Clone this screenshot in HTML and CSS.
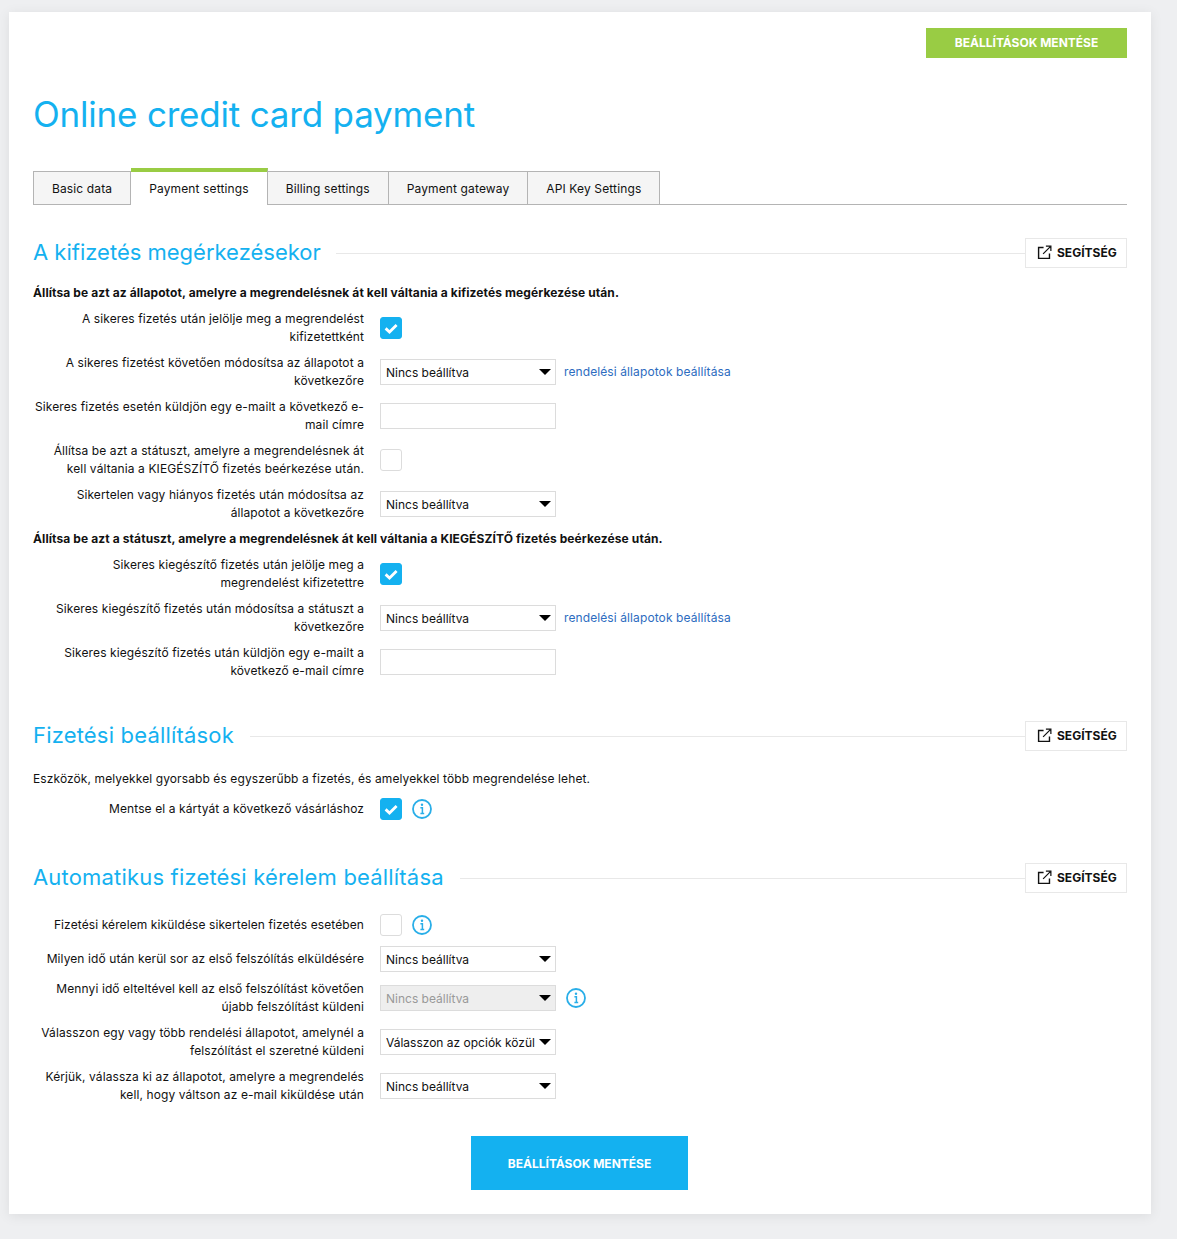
FILE: index.html
```html
<!DOCTYPE html>
<html lang="en">
<head>
    <meta charset="UTF-8">
    <meta name="viewport" content="width=device-width, initial-scale=1.0">
    <title>Online credit card payment</title>
    <link rel="stylesheet" href="styles.css">
</head>
<body>
    <svg class="icon-defs" width="0" height="0" aria-hidden="true">
        <symbol id="icon-check" viewBox="0 0 22 22">
            <path d="M5.6 11.4l3.9 3.6L16.6 8" fill="none" stroke="#fff" stroke-width="2.8"/>
        </symbol>
        <symbol id="icon-info" viewBox="0 0 20 20">
            <circle cx="10" cy="10" r="9" fill="none" stroke="currentColor" stroke-width="1.8"/>
            <circle cx="10" cy="5.8" r="1.2" fill="currentColor"/>
            <path d="M8.4 8.8H10.4V14.8M8.4 14.6H12.2" fill="none" stroke="currentColor" stroke-width="1.5"/>
        </symbol>
        <symbol id="icon-external" viewBox="0 0 16 16">
            <path d="M7 2.7H1.7V14.3H13.3V9" fill="none" stroke="currentColor" stroke-width="1.5"/>
            <path d="M6.5 9.5L14 2M9.5 1.2H14.8V6.5" fill="none" stroke="currentColor" stroke-width="1.3"/>
        </symbol>
    </svg>

    <div class="page-card">
        <div class="top-actions">
            <button class="btn btn-green">BEÁLLÍTÁSOK MENTÉSE</button>
        </div>

        <h1 class="page-title">Online credit card payment</h1>

        <ul class="tabs">
            <li class="tab">Basic data</li>
            <li class="tab active">Payment settings</li>
            <li class="tab">Billing settings</li>
            <li class="tab">Payment gateway</li>
            <li class="tab">API Key Settings</li>
        </ul>

        <section class="section section-first">
            <div class="section-head">
                <h2>A kifizetés megérkezésekor</h2>
                <span class="section-line"></span>
                <a href="#" class="help-btn"><svg class="help-icon"><use href="#icon-external"/></svg>SEGÍTSÉG</a>
            </div>
            <p class="section-note bold">Állítsa be azt az állapotot, amelyre a megrendelésnek át kell váltania a kifizetés megérkezése után.</p>
            <div class="form-rows">
                <div class="form-row">
                    <label>A sikeres fizetés után jelölje meg a megrendelést kifizetettként</label>
                    <div class="control"><span class="check checked"><svg><use href="#icon-check"/></svg></span></div>
                </div>
                <div class="form-row">
                    <label>A sikeres fizetést követően módosítsa az állapotot a következőre</label>
                    <div class="control">
                        <div class="select"><select><option>Nincs beállítva</option></select></div>
                        <a href="#" class="side-link">rendelési állapotok beállítása</a>
                    </div>
                </div>
                <div class="form-row">
                    <label>Sikeres fizetés esetén küldjön egy e-mailt a következő e-mail címre</label>
                    <div class="control"><input type="text" class="text-input"></div>
                </div>
                <div class="form-row">
                    <label>Állítsa be azt a státuszt, amelyre a megrendelésnek át kell váltania a KIEGÉSZÍTŐ fizetés beérkezése után.</label>
                    <div class="control"><span class="check"></span></div>
                </div>
                <div class="form-row">
                    <label>Sikertelen vagy hiányos fizetés után módosítsa az állapotot a következőre</label>
                    <div class="control">
                        <div class="select"><select><option>Nincs beállítva</option></select></div>
                    </div>
                </div>
            </div>
            <p class="section-note bold sub-note">Állítsa be azt a státuszt, amelyre a megrendelésnek át kell váltania a KIEGÉSZÍTŐ fizetés beérkezése után.</p>
            <div class="form-rows">
                <div class="form-row">
                    <label>Sikeres kiegészítő fizetés után jelölje meg a megrendelést kifizetettre</label>
                    <div class="control"><span class="check checked"><svg><use href="#icon-check"/></svg></span></div>
                </div>
                <div class="form-row">
                    <label>Sikeres kiegészítő fizetés után módosítsa a státuszt a következőre</label>
                    <div class="control">
                        <div class="select"><select><option>Nincs beállítva</option></select></div>
                        <a href="#" class="side-link">rendelési állapotok beállítása</a>
                    </div>
                </div>
                <div class="form-row">
                    <label>Sikeres kiegészítő fizetés után küldjön egy e-mailt a következő e-mail címre</label>
                    <div class="control"><input type="text" class="text-input"></div>
                </div>
            </div>
        </section>

        <section class="section">
            <div class="section-head">
                <h2>Fizetési beállítások</h2>
                <span class="section-line"></span>
                <a href="#" class="help-btn"><svg class="help-icon"><use href="#icon-external"/></svg>SEGÍTSÉG</a>
            </div>
            <p class="section-note plain-note">Eszközök, melyekkel gyorsabb és egyszerűbb a fizetés, és amelyekkel több megrendelése lehet.</p>
            <div class="form-rows">
                <div class="form-row">
                    <label>Mentse el a kártyát a következő vásárláshoz</label>
                    <div class="control">
                        <span class="check checked"><svg><use href="#icon-check"/></svg></span>
                        <svg class="info-icon"><use href="#icon-info"/></svg>
                    </div>
                </div>
            </div>
        </section>

        <section class="section">
            <div class="section-head head-spaced">
                <h2>Automatikus fizetési kérelem beállítása</h2>
                <span class="section-line"></span>
                <a href="#" class="help-btn"><svg class="help-icon"><use href="#icon-external"/></svg>SEGÍTSÉG</a>
            </div>
            <div class="form-rows">
                <div class="form-row">
                    <label>Fizetési kérelem kiküldése sikertelen fizetés esetében</label>
                    <div class="control">
                        <span class="check"></span>
                        <svg class="info-icon"><use href="#icon-info"/></svg>
                    </div>
                </div>
                <div class="form-row">
                    <label>Milyen idő után kerül sor az első felszólítás elküldésére</label>
                    <div class="control">
                        <div class="select"><select><option>Nincs beállítva</option></select></div>
                    </div>
                </div>
                <div class="form-row">
                    <label>Mennyi idő elteltével kell az első felszólítást követően újabb felszólítást küldeni</label>
                    <div class="control">
                        <div class="select"><select disabled><option>Nincs beállítva</option></select></div>
                        <svg class="info-icon"><use href="#icon-info"/></svg>
                    </div>
                </div>
                <div class="form-row">
                    <label>Válasszon egy vagy több rendelési állapotot, amelynél a felszólítást el szeretné küldeni</label>
                    <div class="control">
                        <div class="select"><select><option>Válasszon az opciók közül</option></select></div>
                    </div>
                </div>
                <div class="form-row">
                    <label>Kérjük, válassza ki az állapotot, amelyre a megrendelés kell, hogy váltson az e-mail kiküldése után</label>
                    <div class="control">
                        <div class="select"><select><option>Nincs beállítva</option></select></div>
                    </div>
                </div>
            </div>
        </section>

        <div class="bottom-actions">
            <button class="btn btn-blue">BEÁLLÍTÁSOK MENTÉSE</button>
        </div>
    </div>
</body>
</html>
```

FILE: styles.css
```css
:root {
    --blue: #14b1f0;
    --green: #99cc44;
    --bg: #eeeff1;
    --line: #e8e8e8;
    --field-border: #dcdcdc;
    --tab-border: #b4b4b4;
}

* {
    margin: 0;
    padding: 0;
    box-sizing: border-box;
    font-family: 'Inter', sans-serif;
}

body {
    background: var(--bg);
    color: #111;
    font-size: 12px;
    line-height: 18px;
    padding: 12px 26px 25px 9px;
}

.icon-defs {
    position: absolute;
}

.page-card {
    background: #fff;
    padding: 16px 24px 24px;
    box-shadow: 0 2px 12px rgba(0,0,0,0.08);
}

/* Buttons */
.top-actions {
    display: flex;
    justify-content: flex-end;
}

.btn {
    border: none;
    color: #fff;
    font-size: 12px;
    font-weight: 700;
    cursor: pointer;
}

.btn-green {
    background: var(--green);
    width: 201px;
    height: 30px;
    padding-bottom: 2px;
}

.btn-blue {
    background: var(--blue);
    width: 217px;
    height: 54px;
}

.bottom-actions {
    display: flex;
    justify-content: center;
    margin-top: 32px;
    padding-right: 1px;
}

/* Title and tabs */
.page-title {
    color: var(--blue);
    font-size: 35px;
    font-weight: 400;
    letter-spacing: -0.2px;
    line-height: 44px;
    margin-top: 34px;
}

.tabs {
    display: flex;
    list-style: none;
    margin-top: 35px;
    border-bottom: 1px solid var(--tab-border);
    height: 34px;
}

.tab {
    background: #f5f5f5;
    border: 1px solid var(--tab-border);
    border-left: none;
    height: 34px;
    padding: 0 18px;
    font-size: 12px;
    line-height: 33px;
    letter-spacing: 0.13px;
}

.tab:first-child {
    border-left: 1px solid var(--tab-border);
}

.tab.active {
    background: #fff;
    border-top: 4px solid var(--green);
    border-bottom: none;
    height: 37px;
    margin-top: -3px;
}

/* Sections */
.section {
    margin-top: 41px;
}

.section-first {
    margin-top: 33px;
}

.section-head {
    display: flex;
    align-items: center;
    height: 30px;
}

.section-head h2 {
    color: var(--blue);
    font-size: 22px;
    font-weight: 400;
    letter-spacing: 0.18px;
    padding-bottom: 2px;
    white-space: nowrap;
}

.section-first h2 {
    letter-spacing: 0;
}

.section-line {
    flex: 1;
    height: 1px;
    background: var(--line);
    margin-left: 16px;
}

.section-first .section-line {
    margin-left: 15px;
}

.help-btn {
    display: flex;
    align-items: center;
    gap: 5px;
    width: 102px;
    height: 30px;
    padding: 0 0 1px 11px;
    border: 1px solid var(--line);
    color: #111;
    font-size: 12px;
    font-weight: 700;
    text-decoration: none;
}

.help-icon {
    width: 15px;
    height: 15px;
}

.section-note {
    margin-top: 16px;
    margin-bottom: 8px;
    letter-spacing: 0.1px;
}

.section-note.bold {
    font-weight: 700;
}

.sub-note {
    margin-top: 8px;
}

.plain-note {
    margin-top: 19px;
}

.head-spaced {
    margin-bottom: 19px;
}

/* Form rows */
.form-rows {
    display: flex;
    flex-direction: column;
    gap: 8px;
}

.form-row {
    display: grid;
    grid-template-columns: 331px 1fr;
    column-gap: 16px;
    align-items: center;
    min-height: 26px;
}

.form-row label {
    text-align: right;
    letter-spacing: 0.1px;
}

.control {
    display: flex;
    align-items: center;
}

.check {
    display: block;
    width: 22px;
    height: 22px;
    border: 1px solid var(--field-border);
    border-radius: 3px;
    background: #fff;
}

.check svg {
    display: block;
    width: 22px;
    height: 22px;
    margin: -1px;
}

.check.checked {
    background: var(--blue);
    border-color: var(--blue);
}

.select {
    position: relative;
    width: 176px;
    height: 26px;
}

.select::after {
    content: '';
    position: absolute;
    top: 10px;
    right: 5px;
    border-left: 6px solid transparent;
    border-right: 6px solid transparent;
    border-top: 6px solid #000;
    pointer-events: none;
}

.select select {
    appearance: none;
    display: block;
    width: 100%;
    height: 100%;
    border: 1px solid var(--field-border);
    border-radius: 0;
    background: #fff;
    color: #111;
    padding: 0 5px;
    font-size: 12px;
}

.select select:disabled {
    background: #eeeeee;
    color: #999;
    opacity: 1;
}

.text-input {
    display: block;
    width: 176px;
    height: 26px;
    border: 1px solid var(--field-border);
    background: #fff;
}

.side-link {
    color: #2d6cc0;
    font-size: 12px;
    letter-spacing: 0.1px;
    text-decoration: none;
    margin-left: 8px;
    margin-top: -1px;
}

.info-icon {
    width: 20px;
    height: 20px;
    margin-left: 10px;
    color: #29aee8;
}
```
